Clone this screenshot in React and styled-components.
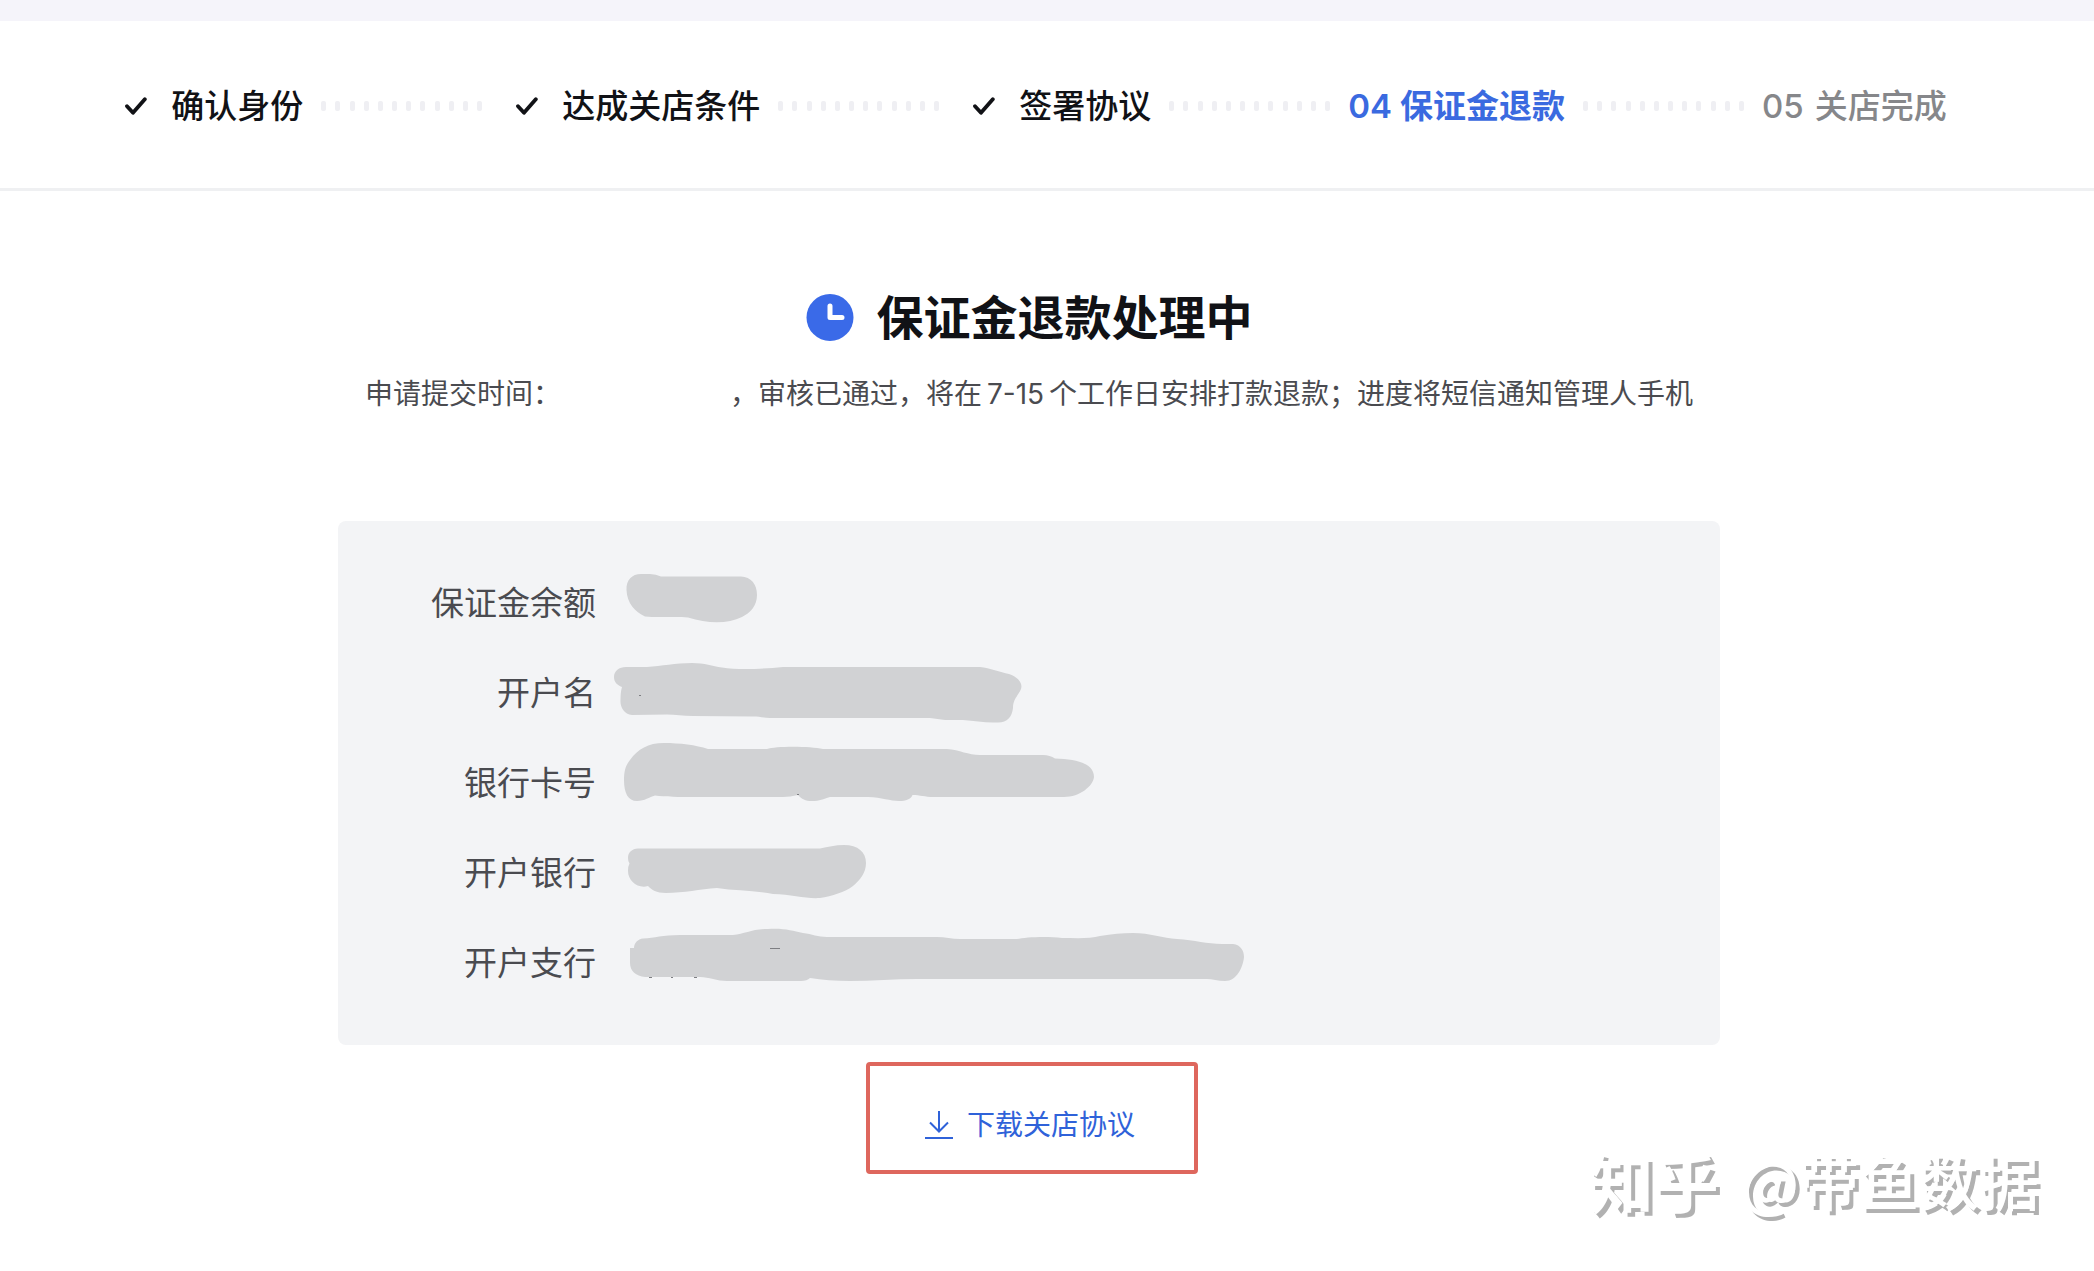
import React from "react";
import styled, { createGlobalStyle } from "styled-components";

const GlobalStyle = createGlobalStyle`
  *, *::before, *::after { box-sizing: border-box; }
  body {
    margin: 0;
    background: #ffffff;
    color: #111216;
    font-family: Inter, "Noto Sans CJK SC", sans-serif;
  }
`;

const Page = styled.div`
  position: relative;
  min-height: 100vh;
  overflow: hidden;
`;

const TopStrip = styled.div`
  height: 21px;
  background: #f5f4fa;
`;

const Header = styled.header`
  height: 170px;
  padding: 2px 38px 0 0;
  border-bottom: 3px solid #eff0f2;
  display: flex;
  justify-content: center;
  align-items: center;
`;

const Steps = styled.ol`
  display: flex;
  align-items: center;
  gap: 18px;
  margin: 0;
  padding: 0;
  list-style: none;
`;

const stepColors = { done: "#111216", current: "#3a6ae0", todo: "#86878a" };

const Step = styled.li`
  display: flex;
  align-items: center;
  gap: ${(p) => (p.$state === "current" ? 8 : 11)}px;
  font-size: 33px;
  line-height: 48px;
  white-space: nowrap;
  font-weight: ${(p) => (p.$state === "current" ? 700 : 500)};
  color: ${(p) => stepColors[p.$state]};
`;

const StepNumber = styled.span`
  font-weight: ${(p) => (p.$state === "current" ? 600 : 500)};
`;

const CheckMark = styled.svg`
  width: 22px;
  height: 18px;
  margin: 0 13px 0 16px;
`;

const Dots = styled.li`
  display: flex;
  justify-content: space-between;
  width: 161px;
`;

const Dot = styled.span`
  width: 5px;
  height: 10px;
  border-radius: 2px;
  background: #efeff3;
`;

const Main = styled.main`
  padding: 95px 36px 0 0;
  display: flex;
  flex-direction: column;
  align-items: center;
`;

const Title = styled.h1`
  display: flex;
  align-items: center;
  gap: 23px;
  margin: 0;
  font-size: 47px;
  line-height: 64px;
  font-weight: 700;
`;

const ClockIcon = styled.svg`
  width: 48px;
  height: 48px;
`;

const Notice = styled.p`
  display: flex;
  margin: 23px 0 0;
  min-height: 84px;
  font-size: 28px;
  line-height: 42px;
  color: #4a4b50;
  white-space: nowrap;
`;

const HiddenTime = styled.span`
  width: 169px;
`;

const DayRange = styled.span`
  padding: 0 5px;
`;

const Card = styled.dl`
  width: 100%;
  max-width: 1382px;
  margin: 64px 0 0;
  padding: 37px 0;
  border-radius: 8px;
  background: #f3f4f6;
`;

const Row = styled.div`
  display: flex;
  align-items: center;
  gap: 10px;
  height: 90px;
`;

const Label = styled.dt`
  width: 258px;
  text-align: right;
  font-size: 33px;
  line-height: 48px;
  color: #4a4b50;
`;

const Value = styled.dd`
  margin: 0;
  height: 90px;
`;

const Scribble = styled.svg`
  display: block;
  width: 660px;
  height: 90px;
  fill: #d1d2d4;
`;

const Footer = styled.div`
  padding: 17px 0 0 6px;
`;

const DownloadLink = styled.a`
  display: flex;
  justify-content: center;
  align-items: center;
  gap: 14px;
  width: 332px;
  height: 112px;
  padding: 14px 4px 0 0;
  border: 4px solid #de675d;
  border-radius: 4px;
  font-size: 28px;
  line-height: 42px;
  color: #2f62d9;
  text-decoration: none;
`;

const DownloadIcon = styled.svg`
  width: 28px;
  height: 28px;
`;

const Watermark = styled.div`
  position: absolute;
  right: 55px;
  bottom: 47px;
  display: flex;
  align-items: center;
  gap: 22px;
  font-size: 60px;
  line-height: 88px;
  font-family: "Noto Sans CJK SC", sans-serif;
  font-weight: 500;
  color: #ffffff;
  text-shadow: 4px 4px 0 #b1b1b1;
  white-space: nowrap;
`;

const Brand = styled.span`
  font-size: 65px;
  font-weight: 700;
`;

const steps = [
  { text: "确认身份", state: "done" },
  { text: "达成关店条件", state: "done" },
  { text: "签署协议", state: "done" },
  { number: "04", text: "保证金退款", state: "current" },
  { number: "05", text: "关店完成", state: "todo" },
];

const rows = [
  {
    label: "保证金余额",
    top: 558,
    path: "M626.5 590C626 580 632 574 641 574L650 574Q656 574 661 576.5L741 576.5C751 577 757 584 757 595C757 606 750 613 742 617C728 624 708 624 688 617.5C675 616 660 618 645 616.5C635 612 627 603 626.5 590Z",
  },
  {
    label: "开户名",
    top: 648,
    path: "M614 677C614 671 619 667 626 667L647 667C662 666 675 663 692 663C705 663 712 666 722 667.5C738 670 762 669 783 667L980 667C990 668 1000 672 1009 674C1018 677 1023 683 1021 689C1018 696 1013 699 1013 708C1012 717 1007 723 997 722.5C985 723 975 721 963 720L945 720L930 718L770 718C765 718 760 716.5 753 716.5L693 716C683 716 675 714.5 667 714.5L632 715C624 714 620 707 620.5 700Q620.5 692 622 687C617 685 614 682 614 677Z",
    specks: "M639 695h2v1h-2z",
  },
  {
    label: "银行卡号",
    top: 738,
    path: "M624 780C624 770 626 765 630 760C638 749 648 743 664 743C680 743 696 745 708 749L767 749C775 746 810 746 823 749L947 749C960 750 968 755 980 755L1043 755Q1050 755 1055 758.5C1078 759 1094 764 1094 777C1093 786 1080 797 1064 797L933 797C925 797 920 795 912.5 795C911 799 906 801 899 801C890 801 882 797.5 868 797L830 797C823 799 820 801 812 801C805 801 802 799 798 795Q790 797 783 797L693 797C680 797 665 797 655 795.5C649 797 645 801 637 801C628 801 624 793 624 780Z",
    specks: "M797 794h2v1h-2z",
  },
  {
    label: "开户银行",
    top: 828,
    path: "M628 858C628 852 632 849 638 848.5L820 848.5C828 847 835 845 844 845C858 845 866 852 866 863C866 873 860 880 853 886C845 892 832 896 820 898C806 899 792 894.5 773 894C755 890 735 891 717 888C700 889 684 893 666 893C656 893 652 890 648 886C638 889 628 881 628 871Q628 866 629.5 863.5Q628 862 628 858Z",
  },
  {
    label: "开户支行",
    top: 918,
    path: "M630 963L630 948L634 948C634 943 638 939 643 938.5C655 938 662 935 680 935L733 935C745 934 752 929 768 929C785 928 792 931 803 933C812 934 818 937 827 937L937 937C945 937 952 939 960 939L1017 939C1025 937 1048 936 1062 938C1075 938 1090 939 1100 936C1112 934 1122 933 1133 933C1150 933 1163 938 1177 939C1195 940 1207 944 1222 944L1233 944C1241 945 1244 951 1244 957C1243 967 1237 981 1225 981C1218 981 1212 979 1207 979L917 979C895 979 872 981 850 981C835 981 822 980 810 978Q807 981 801 981L727 981C717 981 709 977 700 977L645 977C636 976 630 971 630 963Z",
    specks: "M770 948h10v1h-10zM649 977h3v1h-3zM671 977h2v1h-2zM694 977h3v1h-3z",
  },
];

function Check() {
  return (
    <CheckMark viewBox="0 0 22 18" aria-hidden="true">
      <path
        d="M2 9.2L8 15.8L19.8 2.2"
        fill="none"
        stroke="#111216"
        strokeWidth="3.8"
        strokeLinecap="round"
        strokeLinejoin="round"
      />
    </CheckMark>
  );
}

function Separator() {
  return (
    <Dots aria-hidden="true">
      {Array.from({ length: 12 }, (_, i) => (
        <Dot key={i} />
      ))}
    </Dots>
  );
}

export default function App() {
  return (
    <Page>
      <GlobalStyle />
      <TopStrip />
      <Header>
        <Steps>
          {steps.map((step, i) => (
            <React.Fragment key={step.text}>
              {i > 0 && <Separator />}
              <Step $state={step.state}>
                {step.number ? (
                  <StepNumber $state={step.state}>{step.number}</StepNumber>
                ) : (
                  <Check />
                )}
                <span>{step.text}</span>
              </Step>
            </React.Fragment>
          ))}
        </Steps>
      </Header>
      <Main>
        <Title>
          <ClockIcon viewBox="0 0 48 48" aria-hidden="true">
            <circle cx="24" cy="23.5" r="23.5" fill="#3a6ae8" />
            <path
              d="M24 12V23.5H36"
              fill="none"
              stroke="#ffffff"
              strokeWidth="5"
              strokeLinecap="round"
              strokeLinejoin="round"
            />
          </ClockIcon>
          保证金退款处理中
        </Title>
        <Notice>
          <span>申请提交时间：</span>
          <HiddenTime />
          <span>
            ，审核已通过，将在<DayRange>7-15</DayRange>个工作日安排打款退款；进度将短信通知管理人手机
          </span>
        </Notice>
        <Card>
          {rows.map((row) => (
            <Row key={row.label}>
              <Label>{row.label}</Label>
              <Value>
                <Scribble viewBox={`606 ${row.top} 660 90`} aria-hidden="true">
                  <path d={row.path} />
                  {row.specks && <path d={row.specks} fill="#7d7e82" />}
                </Scribble>
              </Value>
            </Row>
          ))}
        </Card>
        <Footer>
          <DownloadLink href="#agreement">
            <DownloadIcon viewBox="0 0 28 28" aria-hidden="true">
              <path
                d="M14 0V20M5 11.5L14 20.5L23 11.5M0 27H28"
                fill="none"
                stroke="#2f62d9"
                strokeWidth="2"
              />
            </DownloadIcon>
            下载关店协议
          </DownloadLink>
        </Footer>
      </Main>
      <Watermark>
        <Brand>知乎</Brand>
        <span>@带鱼数据</span>
      </Watermark>
    </Page>
  );
}
